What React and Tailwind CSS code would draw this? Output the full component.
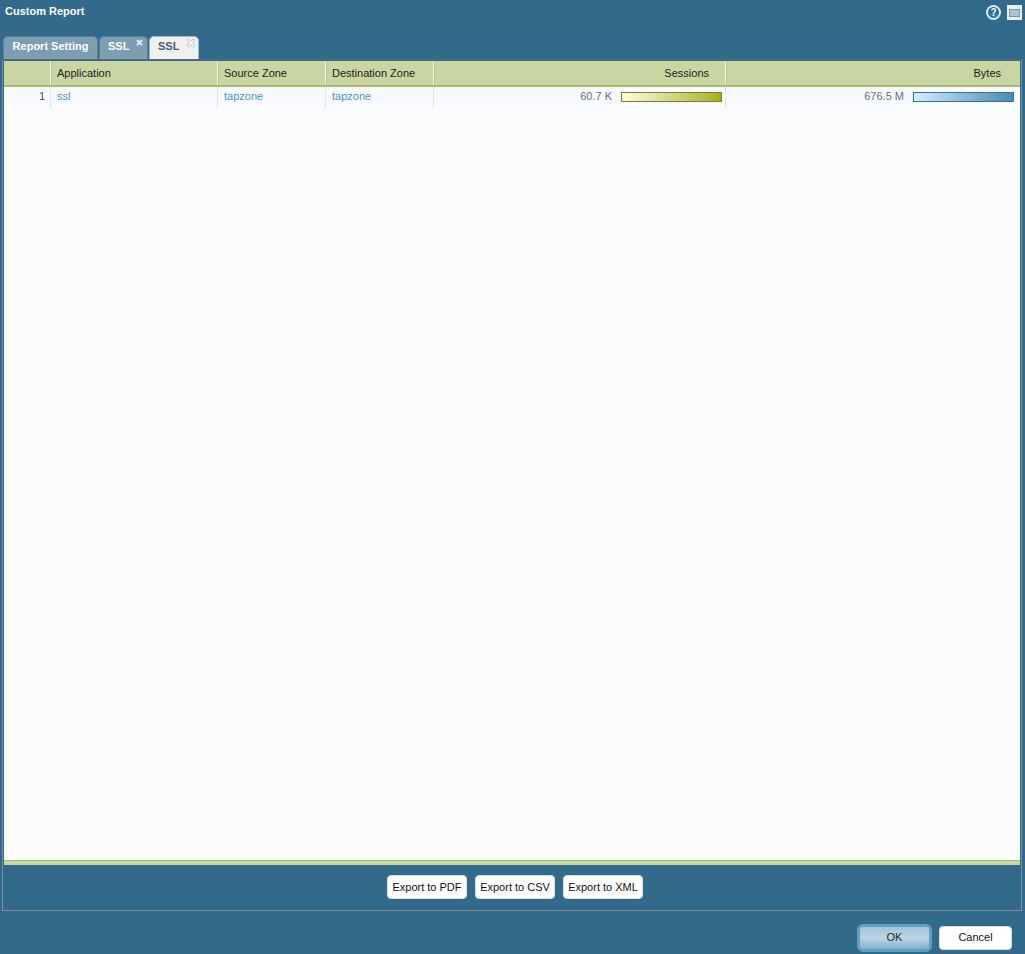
import React from 'react';

const HeadCell = ({ className = '', children }) => (
  <div className={`h-full flex items-center border-r border-[#f2f5e4] shadow-[1px_0_0_#b4c48a] ${className}`}>
    {children}
  </div>
);

const RowCell = ({ className = '', children }) => (
  <div className={`h-full flex items-center pb-[2px] border-r border-[#e2e4e6] ${className}`}>
    {children}
  </div>
);

const ExportButton = ({ label }) => (
  <button className="h-[24px] w-[80px] bg-white rounded-[4px] border border-[#d5dde2] text-[11px] text-[#111] leading-none">
    {label}
  </button>
);

const App = () => {
  return (
    <div className="w-[1025px] h-[954px] bg-[#316a8a] flex flex-col font-['Liberation_Sans',Arial,sans-serif] text-[11px] overflow-hidden">
      {/* Title bar */}
      <div className="h-[36px] flex justify-between pl-[5px] pr-[3px] pt-[5px] shrink-0">
        <span className="text-white font-bold text-[11px] leading-[13px]">Custom Report</span>
        <div className="flex items-start gap-[6px]">
          <div className="w-[15px] h-[15px] rounded-full border-2 border-[#dfe9ef] bg-gradient-to-b from-[#16598c] to-[#2f86c0] text-white font-bold text-[10px] leading-none flex items-center justify-center">?</div>
          <div className="w-[15px] h-[15px] bg-[#e9eff3] px-[2px] flex items-center">
            <div className="w-full h-[8px] bg-[#a9c3d4] border border-[#6f97b0]"></div>
          </div>
        </div>
      </div>

      {/* Tabs */}
      <div className="h-[23px] flex items-end gap-[1px] pl-[3px] shrink-0">
        <div className="h-[23px] w-[95px] pb-[3px] rounded-t-[5px] border border-b-0 border-[#5a7f96] bg-[#7d9db2] text-white font-bold flex items-center justify-center">
          Report Setting
        </div>
        <div className="relative h-[23px] w-[49px] pb-[3px] rounded-t-[5px] border border-b-0 border-[#5a7f96] bg-[#7d9db2] text-white font-bold flex items-center pl-[8px]">
          SSL
          <svg className="absolute top-[2px] right-[4px]" width="7" height="7" viewBox="0 0 7 7">
            <path d="M1 1 L6 6 M6 1 L1 6" stroke="#dfe8ee" strokeWidth="2" />
          </svg>
        </div>
        <div className="relative h-[23px] w-[50px] pb-[3px] rounded-t-[5px] border border-b-0 border-[#a9b6bf] bg-[#eef0f2] text-[#4a6074] font-bold flex items-center pl-[8px]">
          SSL
          <svg className="absolute top-[1px] right-[2px]" width="10" height="10" viewBox="0 0 10 10">
            <path d="M2.5 1 L5 3.2 L7.5 1 L9 2.5 L6.8 5 L9 7.5 L7.5 9 L5 6.8 L2.5 9 L1 7.5 L3.2 5 L1 2.5 Z" fill="#f8f9fa" stroke="#a3aeb6" strokeWidth="0.8" />
          </svg>
        </div>
      </div>

      {/* Report panel */}
      <div className="ml-[2px] mr-[3px] h-[852px] border-[1px] border-[#7f8b92] border-t-[#5c6a72] flex flex-col shrink-0">
        <div className="flex-1 mx-px mt-px bg-[#fbfdfc] flex flex-col min-h-0">
          <div className="h-[26px] flex bg-[#c9d6a3] border-b-2 border-[#a8bb72] text-[#1c1c1c] shrink-0">
            <HeadCell className="w-[47px]" />
            <HeadCell className="w-[167px] pl-[6px]">Application</HeadCell>
            <HeadCell className="w-[108px] pl-[6px]">Source Zone</HeadCell>
            <HeadCell className="w-[108px] pl-[6px]">Destination Zone</HeadCell>
            <HeadCell className="w-[292px] justify-end pr-[16px]">Sessions</HeadCell>
            <HeadCell className="flex-1 justify-end pr-[19px] border-r-0 shadow-none">Bytes</HeadCell>
          </div>
          <div className="h-[21px] flex bg-[#f9fafd] shrink-0">
            <RowCell className="w-[47px] justify-end pr-[5px] text-[#4a4a4a]">1</RowCell>
            <RowCell className="w-[167px] pl-[6px] text-[#4a94c0]">ssl</RowCell>
            <RowCell className="w-[108px] pl-[6px] text-[#4a94c0]">tapzone</RowCell>
            <RowCell className="w-[108px] pl-[6px] text-[#4a94c0]">tapzone</RowCell>
            <RowCell className="w-[292px] justify-end pr-[3px] gap-[9px] text-[#5d7286]">
              60.7 K
              <div className="w-[101px] h-[10px] border border-[#7f7f1e] bg-gradient-to-r from-[#fdfde0] to-[#abae00]"></div>
            </RowCell>
            <RowCell className="flex-1 justify-end pr-[6px] gap-[9px] text-[#5d7286] border-r-0">
              676.5 M
              <div className="w-[101px] h-[10px] border border-[#2f75a0] bg-gradient-to-r from-[#d6ecfb] to-[#4a8ab3]"></div>
            </RowCell>
          </div>
          <div className="flex-1"></div>
          <div className="h-[5px] bg-[#c9d8a0] border-t border-[#a8bb72] shrink-0"></div>
        </div>
        <div className="h-[45px] flex items-center justify-center gap-[8px] pl-[6px] pb-[1px] shrink-0">
          <ExportButton label="Export to PDF" />
          <ExportButton label="Export to CSV" />
          <ExportButton label="Export to XML" />
        </div>
      </div>

      {/* Dialog buttons */}
      <div className="flex-1 flex items-center justify-end gap-[7px] pr-[13px] pt-[10px]">
        <button className="h-[28px] w-[75px] rounded-[6px] border-[3px] border-[#5f9fc0] bg-gradient-to-b from-[#a3c4d8] via-[#bdd5e3] to-[#7fb0cc] text-[#1a2a33] text-[11px]">
          OK
        </button>
        <button className="h-[24px] w-[73px] bg-white rounded-[4px] border border-[#d5dde2] text-[11px] text-[#111]">
          Cancel
        </button>
      </div>
    </div>
  );
};

export default App;
